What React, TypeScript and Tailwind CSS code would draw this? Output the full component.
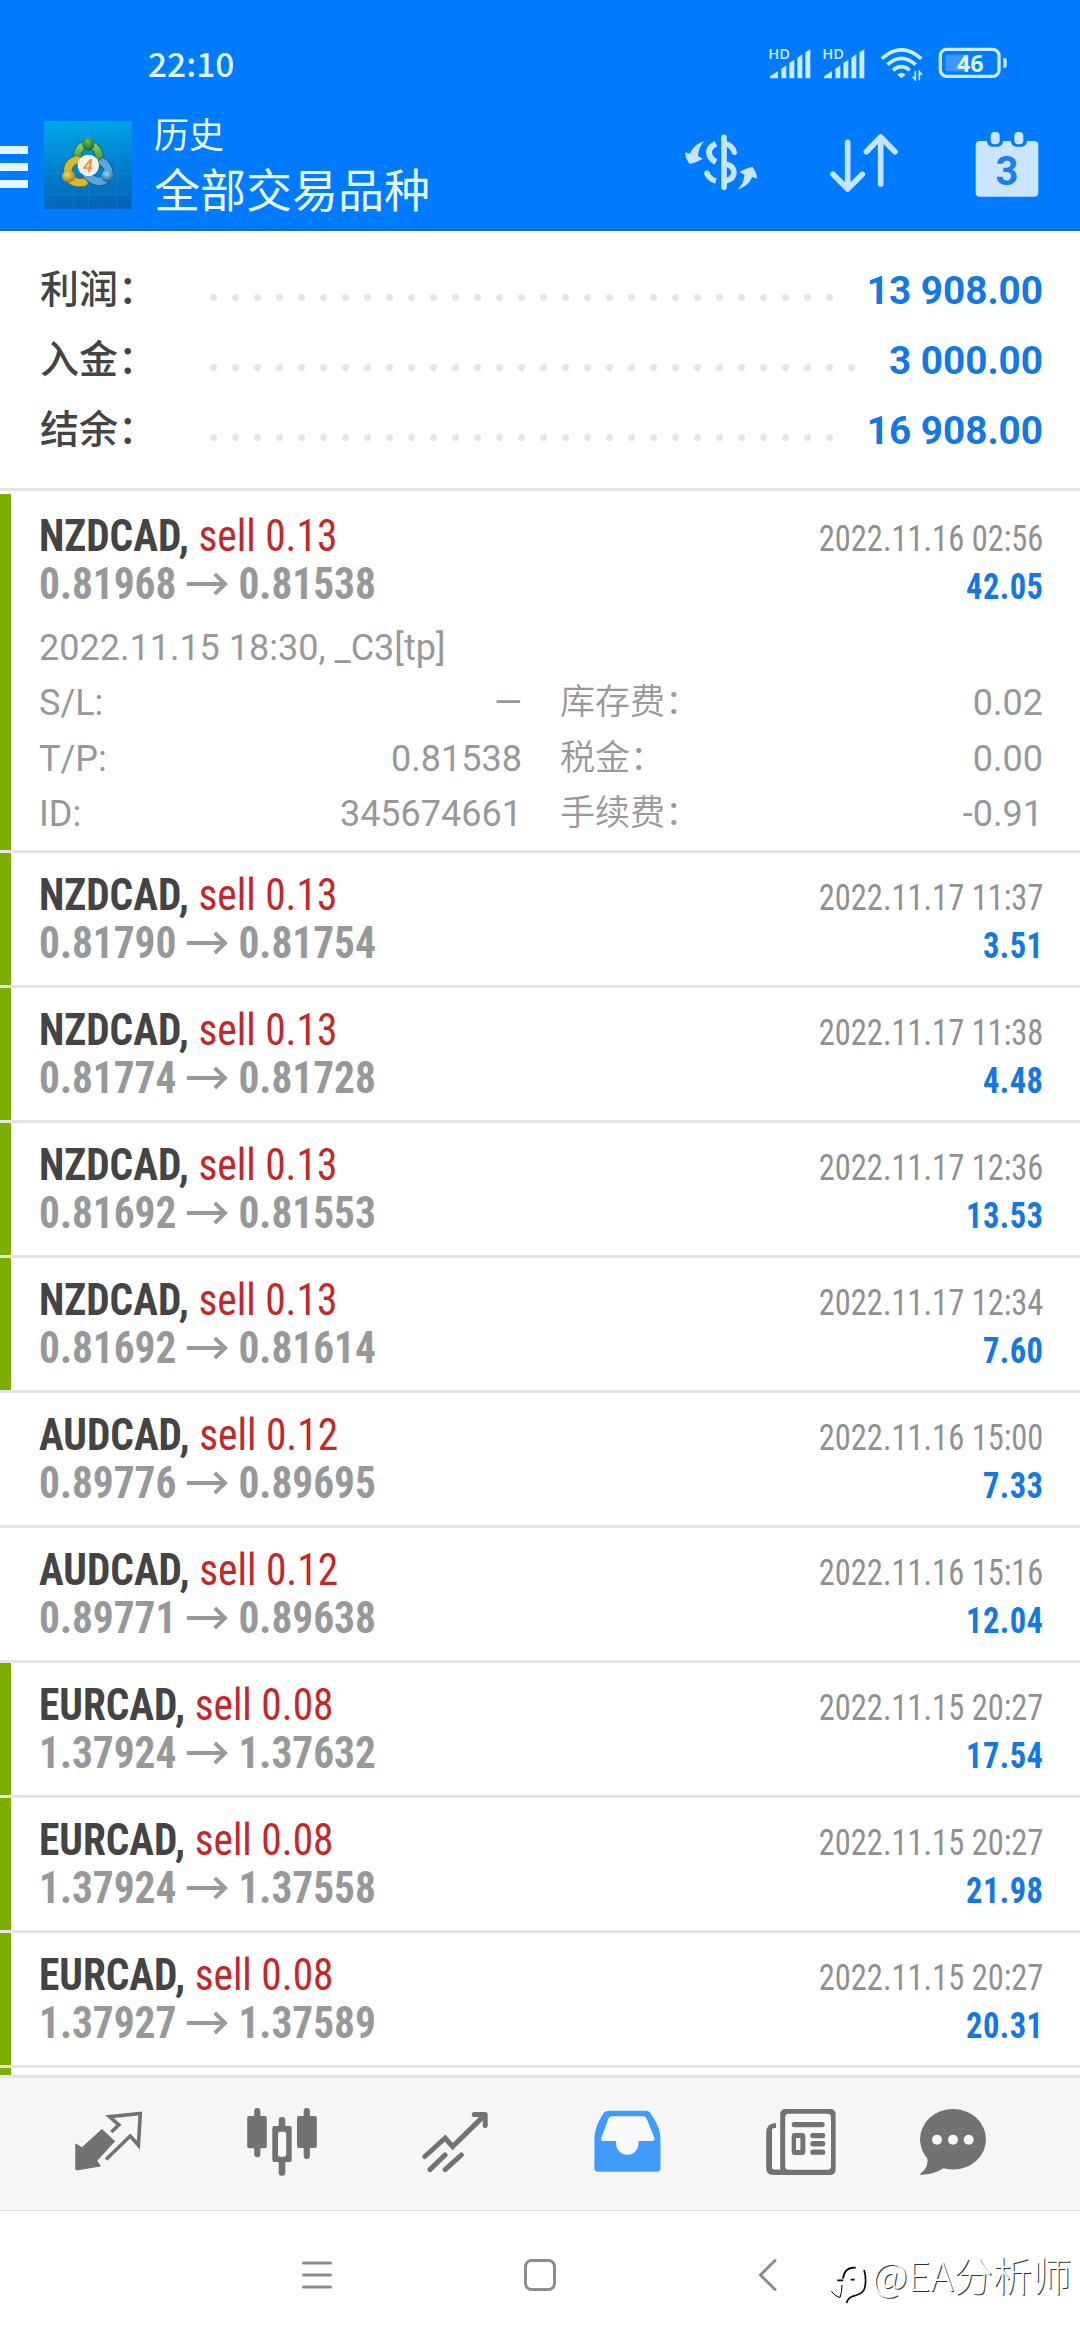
import type { ReactNode } from 'react';

type Deal = {
  symbol: string;
  side: string;
  volume: string;
  open: string;
  close: string;
  time: string;
  profit: string;
  marked: boolean;
};

const summary = [
  { label: '利润：', value: '13 908.00', dots: 29 },
  { label: '入金：', value: '3 000.00', dots: 30 },
  { label: '结余：', value: '16 908.00', dots: 29 },
];

const expanded: Deal = {
  symbol: 'NZDCAD', side: 'sell', volume: '0.13', open: '0.81968', close: '0.81538',
  time: '2022.11.16 02:56', profit: '42.05', marked: true,
};

const details = [
  ['S/L:', '—', '库存费：', '0.02'],
  ['T/P:', '0.81538', '税金：', '0.00'],
  ['ID:', '345674661', '手续费：', '-0.91'],
];

const deals: Deal[] = [
  { symbol: 'NZDCAD', side: 'sell', volume: '0.13', open: '0.81790', close: '0.81754', time: '2022.11.17 11:37', profit: '3.51', marked: true },
  { symbol: 'NZDCAD', side: 'sell', volume: '0.13', open: '0.81774', close: '0.81728', time: '2022.11.17 11:38', profit: '4.48', marked: true },
  { symbol: 'NZDCAD', side: 'sell', volume: '0.13', open: '0.81692', close: '0.81553', time: '2022.11.17 12:36', profit: '13.53', marked: true },
  { symbol: 'NZDCAD', side: 'sell', volume: '0.13', open: '0.81692', close: '0.81614', time: '2022.11.17 12:34', profit: '7.60', marked: true },
  { symbol: 'AUDCAD', side: 'sell', volume: '0.12', open: '0.89776', close: '0.89695', time: '2022.11.16 15:00', profit: '7.33', marked: false },
  { symbol: 'AUDCAD', side: 'sell', volume: '0.12', open: '0.89771', close: '0.89638', time: '2022.11.16 15:16', profit: '12.04', marked: false },
  { symbol: 'EURCAD', side: 'sell', volume: '0.08', open: '1.37924', close: '1.37632', time: '2022.11.15 20:27', profit: '17.54', marked: true },
  { symbol: 'EURCAD', side: 'sell', volume: '0.08', open: '1.37924', close: '1.37558', time: '2022.11.15 20:27', profit: '21.98', marked: true },
  { symbol: 'EURCAD', side: 'sell', volume: '0.08', open: '1.37927', close: '1.37589', time: '2022.11.15 20:27', profit: '20.31', marked: true },
];

function SignalIcon() {
  return (
    <svg className="-mt-3 -ml-2 overflow-visible" width="50" height="44" viewBox="362 104 150 132" fill="#c9edff">
      <text x="384" y="177" fontSize="44" fontWeight="600" fontFamily="Open Sans, sans-serif">HD</text>
      <path d="M389 234v-6l24-16v22zM423 234v-29l15-10v39zM447 234v-46l15-10v56zM471 234v-62l15-10v72zM495 234v-78l15-9v87z" />
    </svg>
  );
}

function WifiIcon() {
  return (
    <svg width="43" height="34" viewBox="719 144 129 102" fill="none" stroke="#c9edff" strokeWidth="11">
      <path d="M724 179Q783 126 843 179M741 197Q783 159 826 197M758 214Q783 192 808 214" />
      <path d="M771 227Q783 216 796 227L785 236H781z" fill="#c9edff" stroke="none" />
      <path d="M825 216v26l-8-9M837 244v-26l8 10" strokeWidth="5" />
    </svg>
  );
}

function BatteryIcon() {
  return (
    <svg width="70" height="32" viewBox="892 144 210 96">
      <rect x="915" y="167" width="62" height="50" rx="6" fill="#3c97ff" />
      <rect x="899" y="151" width="176" height="81" rx="19" fill="none" stroke="#c9edff" strokeWidth="10" />
      <path d="M1088 177h3q7 0 7 7v16q0 7-7 7h-3z" fill="#c9edff" />
      <text x="989" y="218" textAnchor="middle" fontSize="70" fontWeight="700" fontFamily="Open Sans, sans-serif" fill="#dcf6ff">46</text>
    </svg>
  );
}

function AppLogo() {
  return (
    <svg width="88" height="88" viewBox="42 32 264 264">
      <defs>
        <linearGradient id="logoBg" x1="0.5" y1="0" x2="0.6" y2="1">
          <stop offset="0" stopColor="#02a5ea" />
          <stop offset="0.5" stopColor="#0082cc" />
          <stop offset="1" stopColor="#0563b8" />
        </linearGradient>
        <linearGradient id="logoGreen" x1="0" y1="0" x2="0" y2="1">
          <stop offset="0" stopColor="#8cc96d" />
          <stop offset="1" stopColor="#2c8a35" />
        </linearGradient>
        <radialGradient id="ballGreen" cx="0.45" cy="0.3" r="0.7">
          <stop offset="0" stopColor="#6db95c" />
          <stop offset="1" stopColor="#146a25" />
        </radialGradient>
        <radialGradient id="ballGold" cx="0.4" cy="0.35" r="0.7">
          <stop offset="0" stopColor="#f3dc6a" />
          <stop offset="1" stopColor="#96760a" />
        </radialGradient>
        <radialGradient id="ballBlue" cx="0.45" cy="0.3" r="0.7">
          <stop offset="0" stopColor="#9ad2f3" />
          <stop offset="1" stopColor="#11609f" />
        </radialGradient>
      </defs>
      <rect x="42" y="32" width="264" height="264" fill="url(#logoBg)" />
      <path d="M42 122h264M42 252h264M131 32v264M261 32v264M42 188h264M175 32v264" stroke="#35a9e2" strokeWidth="2" opacity="0.35" />
      <g fill="none" strokeLinecap="round">
        <path d="M143 150Q136 106 175 104Q212 106 208 160" stroke="#176c33" strokeWidth="26" />
        <path d="M143 150Q136 106 175 104Q212 106 208 160" stroke="url(#logoGreen)" strokeWidth="21" />
        <path d="M140 148Q110 158 114 188Q120 222 162 216" stroke="#75640e" strokeWidth="27" />
        <path d="M140 148Q110 158 114 188Q120 222 162 216" stroke="#d3ba3c" strokeWidth="22" />
        <path d="M218 155Q242 172 234 201Q205 228 172 195" stroke="#14588f" strokeWidth="27" />
        <path d="M218 155Q242 172 234 201Q205 228 172 195" stroke="#5aa5dc" strokeWidth="22" />
      </g>
      <ellipse cx="175" cy="101" rx="18" ry="20" fill="url(#ballGreen)" />
      <ellipse cx="116" cy="198" rx="20" ry="18" fill="url(#ballGold)" />
      <ellipse cx="232" cy="197" rx="19" ry="18" fill="url(#ballBlue)" />
      <circle cx="175" cy="165" r="32" fill="#f3f0ee" />
      <text x="174" y="184" textAnchor="middle" fontSize="54" fontStyle="italic" fontWeight="600" fontFamily="Roboto, sans-serif" fill="#f5923c">4</text>
    </svg>
  );
}

function CurrencyIcon() {
  return (
    <svg width="74" height="60" viewBox="135 399 222 180" fill="none" stroke="#c5e4ff">
      <path d="M255 415V565" strokeWidth="17" strokeLinecap="round" />
      <path d="M231 434Q210 444 210 459Q210 478 231 489" strokeWidth="18" />
      <path d="M258 434Q280 438 286 460" strokeWidth="16" strokeLinecap="round" />
      <path d="M258 494Q285 500 285 520Q285 540 258 547" strokeWidth="17" />
      <path d="M204 523Q210 540 231 546" strokeWidth="17" />
      <circle cx="204" cy="523" r="8.5" fill="#c5e4ff" stroke="none" />
      <path d="M138 460L152 464Q166 434 196 427Q178 446 177 471L192 479Q174 490 152 495Q139 480 138 460z" fill="#c5e4ff" stroke="none" />
      <path d="M354 539L340 534Q326 564 296 571Q315 552 316 527L301 519Q318 508 340 503Q353 518 354 539z" fill="#c5e4ff" stroke="none" />
    </svg>
  );
}

function SortIcon() {
  return (
    <svg width="70" height="62" viewBox="570 400 210 186" fill="none" stroke="#c5e4ff" strokeWidth="17" strokeLinecap="round" strokeLinejoin="round">
      <path d="M626 431V570M582 527L626 571L670 527" />
      <path d="M725 556V416M682 459L725 415L768 459" />
    </svg>
  );
}

function CalendarIcon() {
  return (
    <svg width="66" height="68" viewBox="1005 390 198 204" fill="#cbe4ff">
      <rect x="1010" y="423" width="188" height="167" rx="12" />
      <path d="M1044 420h48v6q-4 14-15 14h-18q-11 0-15-14zM1116 420h48v6q-4 14-15 14h-18q-11 0-15-14z" fill="#007aff" />
      <rect x="1055" y="396" width="27" height="37" rx="12" />
      <rect x="1126" y="396" width="27" height="37" rx="12" />
      <text x="1104" y="555" textAnchor="middle" fontSize="120" fontWeight="700" fontFamily="Roboto, sans-serif" fill="#1c7ded">3</text>
    </svg>
  );
}

function QuotesIcon() {
  return (
    <svg width="70" height="64" viewBox="0 0 70 64">
      <path d="M1.8 34L8 37.7L27.9 19.4L40.6 31.3L22.8 50.7L26.3 56L2.4 60L1.8 59z" fill="#727272" stroke="#727272" strokeLinejoin="round" />
      <path d="M37.4 22L44.8 14.9L35.5 6.7L66.3 3.4L64.4 35.3L56.2 26L32 49.5" fill="none" stroke="#727272" strokeWidth="3.6" />
    </svg>
  );
}

function ChartIcon() {
  return (
    <svg width="72" height="70" viewBox="0 0 72 70" fill="#727272">
      <rect x="1.2" y="9" width="19.6" height="32.3" rx="2" />
      <rect x="8.2" y="1" width="6.2" height="49.3" rx="3" />
      <rect x="32.7" y="10" width="6.6" height="58.7" rx="3" />
      <rect x="26.3" y="19" width="19.4" height="36" rx="2" />
      <rect x="32" y="24.7" width="8.2" height="25" rx="2" fill="#f8f8f8" />
      <rect x="51" y="9" width="19.8" height="32" rx="2" />
      <rect x="57.7" y="1" width="6.2" height="51" rx="3" />
    </svg>
  );
}

function TradeIcon() {
  return (
    <svg width="68" height="62" viewBox="0 0 68 62" fill="none" stroke="#727272" strokeWidth="5" strokeLinecap="round">
      <path d="M3.8 45.5L24.2 27L31.6 35.6L63.4 4.4" />
      <path d="M53.2 3.6H64.2V14.6" strokeLinejoin="round" />
      <path d="M8.9 58.6L24 44M24.1 58.6L40.3 44" />
    </svg>
  );
}

function HistoryIcon() {
  return (
    <svg width="68" height="64" viewBox="0 0 68 64">
      <path d="M15 .7H52Q55 .7 57 4C63 13 66.5 20 66.5 30V58Q66.5 61.7 63 61.7H4Q.4 61.7 .4 58V30C.4 20 4 12 9 4Q11 .7 15 .7Z" fill="#3f9bfc" />
      <path d="M18 6.3H49Q51.5 6.3 52.5 8.5L60.5 28Q61 31 58 31H44.5V33.5A11.2 11.2 0 0 1 22.1 33.5V31H9.5Q6.5 31 7.3 28L14.5 8.5Q15.5 6.3 18 6.3Z" fill="#f9fafb" />
    </svg>
  );
}

function NewsIcon() {
  return (
    <svg width="72" height="68" viewBox="0 0 72 68" fill="#727272">
      <path d="M1.2 25Q1.2 15 11 15V20H14V67H8Q1.2 67 1.2 60z" />
      <rect x="7" y="20" width="8" height="41.5" rx="2.5" fill="#fafafa" />
      <rect x="15.2" y="1" width="55.4" height="66" rx="5" />
      <rect x="8" y="62" width="14" height="5" />
      <rect x="20.2" y="5.8" width="45.8" height="56" rx="3.5" fill="#fafafa" />
      <rect x="26.7" y="14" width="33" height="5.2" rx="2.6" />
      <rect x="26.7" y="25" width="13.6" height="22" rx="3" />
      <rect x="31" y="30" width="4.4" height="12" fill="#fafafa" />
      <rect x="45.3" y="25" width="15" height="5.2" rx="2.6" />
      <rect x="45.3" y="33" width="15" height="5.4" rx="2.6" />
      <rect x="45.3" y="41.4" width="15" height="5.4" rx="2.6" />
    </svg>
  );
}

function ChatIcon() {
  return (
    <svg width="68" height="68" viewBox="0 0 68 68" fill="#727272">
      <ellipse cx="34" cy="31.3" rx="33" ry="30.3" />
      <path d="M8 48Q11 59 1 66Q0 67 3 66.8Q15 66.5 24 60.5L30 56z" />
      <circle cx="18" cy="31.8" r="5" fill="#f6f6f6" />
      <circle cx="34" cy="31.8" r="5" fill="#f6f6f6" />
      <circle cx="49.7" cy="31.8" r="5" fill="#f6f6f6" />
    </svg>
  );
}

function WatermarkLogo() {
  return (
    <svg width="38" height="42" viewBox="30 45 114 126" fill="none" stroke="#000" strokeWidth="5">
      <path d="M107 53C84 51 72 62 69 86" />
      <path d="M52 91H70M92 89H104" />
      <path d="M34 124Q44 138 60 143Q66 125 66 105" strokeWidth="3" />
      <path d="M132 60C139 80 138 108 131 121C124 133 104 137 95 140Q83 145 80 159" strokeWidth="5" />
    </svg>
  );
}

function SummaryRow({ label, value, dots }: { label: string; value: string; dots: number }) {
  return (
    <div className="flex h-[70px] items-center pr-[37px] pl-10">
      <span className="h-[70px] w-[170px] shrink-0 text-[39px] leading-[71px] font-medium whitespace-nowrap text-[#444]">{label}</span>
      <span className="mt-[15px] flex gap-[15px]">
        {Array.from({ length: dots }, (_, i) => (
          <i key={i} className="size-[7px] rounded-full bg-[#e5e5e5]" />
        ))}
      </span>
      <span className="mt-0.5 ml-auto text-[38.7px] leading-[70px] font-bold whitespace-nowrap text-[#1478e2]">{value}</span>
    </div>
  );
}

function DealHead({ deal }: { deal: Deal }) {
  return (
    <div className="flex justify-between">
      <div className="origin-left scale-x-94 pt-[18px] text-[44px] leading-[48px] font-stretch-condensed">
        <p className="whitespace-nowrap">
          <span className="font-bold text-[#444]">{deal.symbol}, </span>
          <span className="text-[#c4272a]">{deal.side} {deal.volume}</span>
        </p>
        <p className="flex items-center font-bold text-[#97989a]">
          {deal.open}
          <svg className="mx-[11px]" width="44" height="24" viewBox="0 0 44 24" fill="none" stroke="#97989a" strokeWidth="4">
            <path d="M0 12H41M30 2L41 12L30 22" />
          </svg>
          {deal.close}
        </p>
      </div>
      <div className="origin-right scale-x-89 pt-[21px] text-right text-[36.5px] leading-[48px] font-stretch-condensed">
        <p className="text-[#8f9092]">{deal.time}</p>
        <p className="font-bold tracking-[0.5px] text-[#1478e2]">{deal.profit}</p>
      </div>
    </div>
  );
}

function DealRow({ deal, children }: { deal: Deal; children?: ReactNode }) {
  return (
    <div className={`border-b-3 border-b-[#e4e4e4] ${children ? 'h-[359px]' : 'h-[135px]'}`}>
      <div className={`h-full border-l-11 pr-[37px] pl-7 ${deal.marked ? 'border-l-[#7cae00]' : 'border-l-white'}`}>
        <DealHead deal={deal} />
        {children}
      </div>
    </div>
  );
}

export default function App() {
  return (
    <div className="flex h-[2340px] w-[1080px] flex-col overflow-hidden bg-white font-['Roboto','Noto_Sans_CJK_SC',sans-serif]">
      <header className="h-[231px] shrink-0 border-b-2 border-[#1b69b4] bg-[#007aff]">
        <div className="flex h-[110px] items-start pr-[72px] pl-[148px]">
          <span className="mt-10 font-['Noto_Sans_CJK_SC',sans-serif] text-[33.5px] leading-[46px] font-medium text-[#dcf7ff]">22:10</span>
          <div className="mt-[47px] ml-auto flex items-start">
            <SignalIcon />
            <span className="w-3" />
            <SignalIcon />
            <span className="w-[15px]" />
            <WifiIcon />
            <span className="w-[15px]" />
            <BatteryIcon />
          </div>
        </div>
        <div className="flex items-start">
          <div className="mt-9 flex w-7 flex-col gap-[9px]">
            <i className="h-2 bg-[#e2f7ff]" />
            <i className="h-2 bg-[#e2f7ff]" />
            <i className="h-2 bg-[#e2f7ff]" />
          </div>
          <div className="mt-[11px] ml-4">
            <AppLogo />
          </div>
          <div className="ml-[22px] pt-[3px] text-[#e6f9ff]">
            <p className="h-[50px] text-[35px] leading-[48px]">历史</p>
            <p className="h-[57px] text-[46px] leading-[56px]">全部交易品种</p>
          </div>
          <div className="mt-[22px] mr-10 ml-auto flex items-start">
            <CurrencyIcon />
            <span className="w-[71px]" />
            <SortIcon />
            <span className="w-[75px]" />
            <div className="-mt-0.5">
              <CalendarIcon />
            </div>
          </div>
        </div>
      </header>

      <section className="h-[260px] shrink-0 border-b-3 border-[#e4e4e4] pt-6">
        {summary.map((s) => (
          <SummaryRow key={s.label} {...s} />
        ))}
      </section>

      <main className="h-[1584px] shrink-0 overflow-hidden pt-[3px]">
        <DealRow deal={expanded}>
          <div className="pt-[9px] text-[36px] text-[#97989a]">
            <p className="h-[55px] leading-[56px]">2022.11.15 18:30, _C3[tp]</p>
            {details.map(([k, v, k2, v2]) => (
              <div key={k} className="flex h-[55.5px] leading-[56px]">
                <span>{k}</span>
                <span className="ml-auto">{v}</span>
                <span className="ml-[38px] w-[240px] text-[35px] leading-[56px] font-[350]">{k2}</span>
                <span className="w-[243px] text-right">{v2}</span>
              </div>
            ))}
          </div>
        </DealRow>
        {deals.map((deal, i) => (
          <DealRow key={i} deal={deal} />
        ))}
        <div className="h-[7px] w-[11px] bg-[#7cae00]" />
      </main>

      <nav className="flex h-[136px] shrink-0 items-center border-t-3 border-b border-t-[#e4e4e4] border-b-[#dedede] bg-[#f6f6f6] pb-[5px] pl-[22px]">
        <div className="flex w-[173px] justify-center"><QuotesIcon /></div>
        <div className="flex w-[173px] justify-center"><ChartIcon /></div>
        <div className="flex w-[173px] justify-center"><TradeIcon /></div>
        <div className="flex w-[173px] justify-center"><HistoryIcon /></div>
        <div className="flex w-[173px] justify-center"><NewsIcon /></div>
        <div className="flex w-[131px] justify-center"><ChatIcon /></div>
      </nav>

      <footer className="flex flex-1 items-start pt-[47px] pl-[302px]">
        <svg width="30" height="34" viewBox="0 0 30 34" stroke="#8c8c8c" strokeWidth="3" strokeLinecap="round">
          <path d="M1.5 5H28.5M1.5 17H28.5M1.5 29H28.5" />
        </svg>
        <svg className="ml-[191px]" width="34" height="34" viewBox="0 0 34 34" fill="none" stroke="#8c8c8c" strokeWidth="3">
          <rect x="2.5" y="2.5" width="29" height="29" rx="6" />
        </svg>
        <svg className="ml-[200px]" width="22" height="34" viewBox="0 0 22 34" fill="none" stroke="#8c8c8c" strokeWidth="3" strokeLinecap="round">
          <path d="M18 2.5L3.5 17L18 31.5" />
        </svg>
        <div className="mt-[7px] ml-[51px]">
          <WatermarkLogo />
        </div>
        <span className="-mt-3 ml-1 font-['Noto_Sans_CJK_SC',sans-serif] text-[39.3px] leading-[56px] font-light whitespace-nowrap text-white [text-shadow:1px_1px_0_#333]">@EA分析师</span>
      </footer>
    </div>
  );
}
